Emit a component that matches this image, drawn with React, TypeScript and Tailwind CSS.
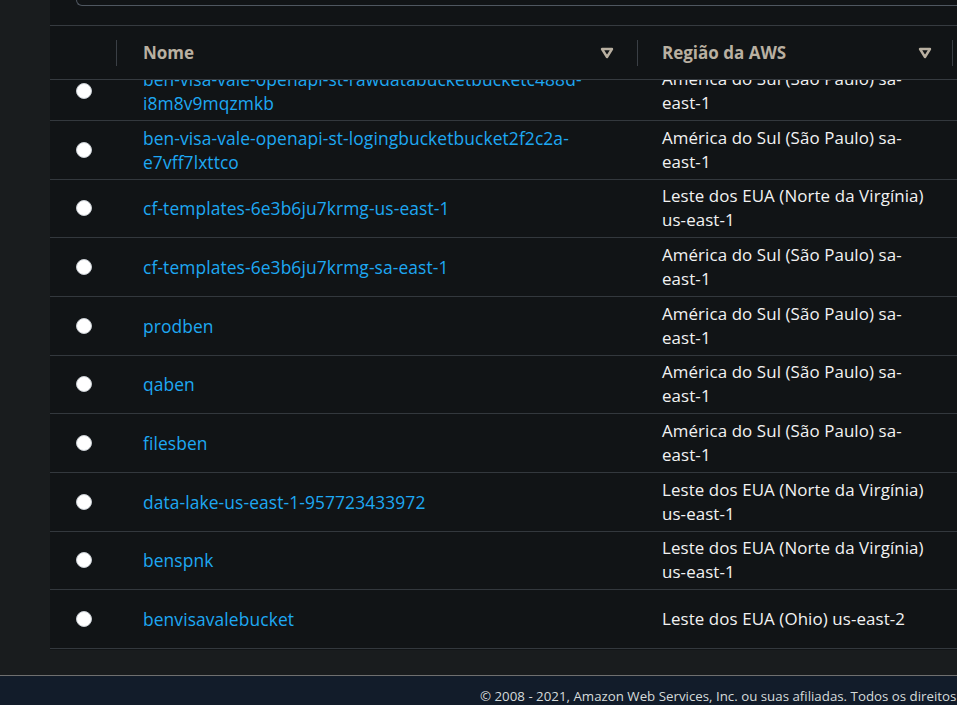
const buckets = [
  {
    name: ['ben-visa-vale-openapi-st-rawdatabucketbucketc488d-', 'i8m8v9mqzmkb'],
    region: ['América do Sul (São Paulo) sa-', 'east-1'],
  },
  {
    name: ['ben-visa-vale-openapi-st-logingbucketbucket2f2c2a-', 'e7vff7lxttco'],
    region: ['América do Sul (São Paulo) sa-', 'east-1'],
  },
  { name: ['cf-templates-6e3b6ju7krmg-us-east-1'], region: ['Leste dos EUA (Norte da Virgínia)', 'us-east-1'] },
  { name: ['cf-templates-6e3b6ju7krmg-sa-east-1'], region: ['América do Sul (São Paulo) sa-', 'east-1'] },
  { name: ['prodben'], region: ['América do Sul (São Paulo) sa-', 'east-1'] },
  { name: ['qaben'], region: ['América do Sul (São Paulo) sa-', 'east-1'] },
  { name: ['filesben'], region: ['América do Sul (São Paulo) sa-', 'east-1'] },
  { name: ['data-lake-us-east-1-957723433972'], region: ['Leste dos EUA (Norte da Virgínia)', 'us-east-1'] },
  { name: ['benspnk'], region: ['Leste dos EUA (Norte da Virgínia)', 'us-east-1'] },
  { name: ['benvisavalebucket'], region: ['Leste dos EUA (Ohio) us-east-2'] },
];

function SortIcon() {
  return (
    <svg width="14" height="12" viewBox="0 0 14 12" className="shrink-0">
      <path d="M2 2 L12 2 L7 10 Z" fill="none" stroke="#b9b0a1" strokeWidth="2.4" strokeLinejoin="round" />
    </svg>
  );
}

export default function App() {
  return (
    <div className="flex h-[705px] w-[957px] flex-col overflow-hidden bg-[#191c1e] font-['Open_Sans','Noto_Sans',sans-serif]">
      <div className="flex flex-1 pl-[50px]">
        <section className="flex h-[650px] flex-1 flex-col bg-[#111416]">
          {/* search box, mostly scrolled out of view */}
          <div className="h-[25px] pl-[26px]">
            <div className="h-[6px] rounded-bl-[8px] border-b border-l border-[#4f5760]" />
          </div>

          <div className="flex h-[55px] items-center border-y border-[#363b40] text-[17px] font-bold text-[#b9b0a1]">
            <div className="flex h-[26px] w-[67px] shrink-0 justify-end">
              <div className="w-px bg-[#3a3f45]" />
            </div>
            <div className="flex w-[520px] shrink-0 items-center justify-between pl-[26px] pr-[23px]">
              <span>Nome</span>
              <SortIcon />
            </div>
            <div className="h-[26px] w-px bg-[#3a3f45]" />
            <div className="flex w-[314px] shrink-0 items-center justify-between pl-[24px] pr-[20px]">
              <span>Região da AWS</span>
              <SortIcon />
            </div>
            <div className="h-[26px] w-px bg-[#3a3f45]" />
          </div>

          <div className="h-[570px] overflow-hidden">
            <div className="-mt-[17.7px]">
              {buckets.map((b) => (
                <div
                  key={b.name.join('')}
                  className="flex h-[58.67px] items-center border-b border-[#33383d] text-[17.4px] leading-[24px] tracking-[0.1px] whitespace-nowrap"
                >
                  <div className="flex w-[67px] shrink-0 justify-center">
                    <span className="h-4 w-4 rounded-full border border-[#c7ccd1] bg-white" />
                  </div>
                  <div className="w-[521px] shrink-0 pl-[26px] text-[#1ea8f2]">
                    {b.name.map((line) => (
                      <div key={line}>{line}</div>
                    ))}
                  </div>
                  <div className="w-[314px] shrink-0 pl-[24px] text-[16.9px] text-[#f2f2f2]">
                    {b.region.map((line) => (
                      <div key={line}>{line}</div>
                    ))}
                  </div>
                </div>
              ))}
            </div>
          </div>
        </section>
      </div>

      <footer className="h-[30px] shrink-0 overflow-hidden whitespace-nowrap border-t border-[#6f6f6f] bg-[#121c2a] pl-[480px] pt-[11px] text-[13.3px] leading-[18px] text-[#d5dbdb]">
        © 2008 - 2021, Amazon Web Services, Inc. ou suas afiliadas. Todos os direitos reservados.
      </footer>
    </div>
  );
}
